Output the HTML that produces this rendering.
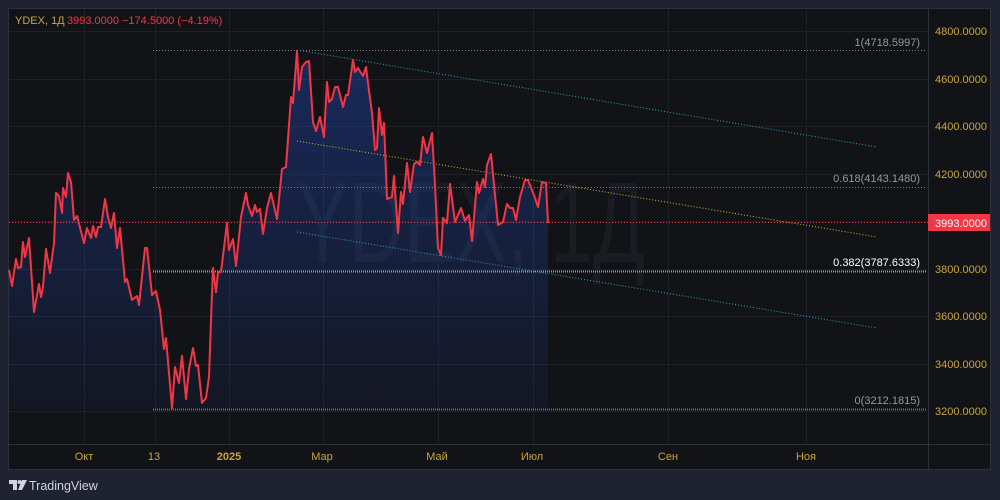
<!DOCTYPE html>
<html><head><meta charset="utf-8"><style>
html,body{margin:0;padding:0;background:#1e222d;}
svg{display:block}
text{font-family:"Liberation Sans",sans-serif;}
</style></head><body>
<svg width="1000" height="500" viewBox="0 0 1000 500" xmlns="http://www.w3.org/2000/svg">
<defs>
<linearGradient id="g" x1="0" y1="0" x2="0" y2="1">
<stop offset="0" stop-color="#2962ff" stop-opacity="0.30"/>
<stop offset="1" stop-color="#2962ff" stop-opacity="0.05"/>
</linearGradient>
</defs>
<rect width="1000" height="500" fill="#1f2230"/>
<rect x="8.5" y="8.5" width="982" height="461" fill="#121317" stroke="#2c303b"/>
<line x1="928.5" y1="9" x2="928.5" y2="469" stroke="#2c303b"/>
<line x1="9" y1="444.5" x2="990" y2="444.5" stroke="#2c303b"/>
<g stroke="#1d2028" stroke-width="1">
<line x1="9" y1="31.5" x2="928" y2="31.5"/><line x1="9" y1="79.5" x2="928" y2="79.5"/><line x1="9" y1="126.5" x2="928" y2="126.5"/><line x1="9" y1="174.5" x2="928" y2="174.5"/><line x1="9" y1="221.5" x2="928" y2="221.5"/><line x1="9" y1="269.5" x2="928" y2="269.5"/><line x1="9" y1="316.5" x2="928" y2="316.5"/><line x1="9" y1="364.5" x2="928" y2="364.5"/><line x1="9" y1="411.5" x2="928" y2="411.5"/>
<line x1="84.5" y1="9" x2="84.5" y2="444"/><line x1="155.5" y1="9" x2="155.5" y2="444"/><line x1="229.5" y1="9" x2="229.5" y2="444"/><line x1="323.5" y1="9" x2="323.5" y2="444"/><line x1="438.5" y1="9" x2="438.5" y2="444"/><line x1="533.5" y1="9" x2="533.5" y2="444"/><line x1="668.5" y1="9" x2="668.5" y2="444"/><line x1="806.5" y1="9" x2="806.5" y2="444"/>
</g>
<text x="297" y="262" font-size="115" fill="#191c23" textLength="348" lengthAdjust="spacingAndGlyphs">YDEX, 1Д</text>
<polygon fill="url(#g)" points="9,410 9,270 12,286 16,259 18,268 21,267 23,242 25,257 29,238 34,312 39,284 41,297 43,287 46,249 50,273 54,243 56,193 59,196 62,213 63,188 66,197 68,173 71,182 74,220 77,216 84,243 87,228 91,238 93,226 96,237 98,227 101,227 105,199 108,217 111,228 114,213 117,248 120,228 125,282 127,279 132,300 137,296 139,305 145,248 147,248 152,295 156,291 160,310 164,349 166,338 172,408 175,367 179,383 182,356 186,399 189,369 193,348 196,366 198,365 202,403 206,398 209,377 212,293 213,268 216,292 218,272 221,272 227,223 229,250 233,239 236,266 241,217 246,193 248,205 252,216 255,205 257,212 260,209 263,234 267,208 271,193 277,219 282,169 286,167 291,97 293,103 297,51 299,90 302,67 306,62 309,61 313,122 316,131 320,117 324,137 327,82 329,102 332,99 335,87 338,87 343,107 346,95 348,95 353,60 355,72 358,68 361,73 363,76 366,67 368,83 372,113 375,150 377,148 379,108 382,135 384,123 387,199 392,197 394,176 398,233 401,192 403,204 407,163 410,192 414,164 417,162 420,165 423,137 427,153 432,133 435,185 438,248 441,255 443,218 447,223 450,184 455,222 461,208 465,221 469,215 472,241 477,182 479,193 483,179 485,187 487,165 491,154 494,185 498,225 503,222 507,204 510,208 513,208 516,220 520,197 525,180 528,180 532,190 535,198 538,207 542,182 546,183 548,223 548,410"/>
<g fill="none" stroke-width="1">
<line x1="153" y1="50.5" x2="927" y2="50.5" stroke="#787b86" stroke-dasharray="1 2"/>
<line x1="153" y1="187.5" x2="927" y2="187.5" stroke="#787b86" stroke-dasharray="1 2"/>
<line x1="153" y1="271.5" x2="927" y2="271.5" stroke="#9598a1" stroke-width="2" stroke-dasharray="1 1"/>
<line x1="153" y1="409.5" x2="927" y2="409.5" stroke="#6a6d78" stroke-width="2" stroke-dasharray="1 1"/>
<line x1="9" y1="222.5" x2="928" y2="222.5" stroke="#f23645" stroke-dasharray="1 2"/>
<line x1="297" y1="50" x2="877" y2="147" stroke="#22a3b8" stroke-dasharray="1 2"/>
<line x1="297" y1="232" x2="877" y2="328" stroke="#22a3b8" stroke-dasharray="1 2"/>
<line x1="297" y1="141" x2="877" y2="237" stroke="#c8b62e" stroke-dasharray="1 2"/>
</g>
<polyline fill="none" stroke="#f23645" stroke-width="2" stroke-linejoin="round" points="9,270 12,286 16,259 18,268 21,267 23,242 25,257 29,238 34,312 39,284 41,297 43,287 46,249 50,273 54,243 56,193 59,196 62,213 63,188 66,197 68,173 71,182 74,220 77,216 84,243 87,228 91,238 93,226 96,237 98,227 101,227 105,199 108,217 111,228 114,213 117,248 120,228 125,282 127,279 132,300 137,296 139,305 145,248 147,248 152,295 156,291 160,310 164,349 166,338 172,408 175,367 179,383 182,356 186,399 189,369 193,348 196,366 198,365 202,403 206,398 209,377 212,293 213,268 216,292 218,272 221,272 227,223 229,250 233,239 236,266 241,217 246,193 248,205 252,216 255,205 257,212 260,209 263,234 267,208 271,193 277,219 282,169 286,167 291,97 293,103 297,51 299,90 302,67 306,62 309,61 313,122 316,131 320,117 324,137 327,82 329,102 332,99 335,87 338,87 343,107 346,95 348,95 353,60 355,72 358,68 361,73 363,76 366,67 368,83 372,113 375,150 377,148 379,108 382,135 384,123 387,199 392,197 394,176 398,233 401,192 403,204 407,163 410,192 414,164 417,162 420,165 423,137 427,153 432,133 435,185 438,248 441,255 443,218 447,223 450,184 455,222 461,208 465,221 469,215 472,241 477,182 479,193 483,179 485,187 487,165 491,154 494,185 498,225 503,222 507,204 510,208 513,208 516,220 520,197 525,180 528,180 532,190 535,198 538,207 542,182 546,183 548,223"/>
<g font-size="11" fill="#9598a1" text-anchor="end">
<text x="920" y="46">1(4718.5997)</text>
<text x="920" y="182">0.618(4143.1480)</text>
<text x="920" y="266" fill="#ffffff">0.382(3787.6333)</text>
<text x="920" y="404">0(3212.1815)</text>
</g>
<g font-size="11" fill="#c9a53a">
<text x="935" y="35">4800.0000</text><text x="935" y="83">4600.0000</text><text x="935" y="130">4400.0000</text><text x="935" y="178">4200.0000</text><text x="935" y="273">3800.0000</text><text x="935" y="320">3600.0000</text><text x="935" y="368">3400.0000</text><text x="935" y="415">3200.0000</text>
</g>
<rect x="928" y="214" width="62" height="17" fill="#f23645"/>
<text x="935" y="227" font-size="11" fill="#ffffff">3993.0000</text>
<g font-size="11" fill="#c9a53a" text-anchor="middle">
<text x="84" y="460">Окт</text><text x="154" y="460">13</text><text x="229" y="460" font-weight="bold">2025</text><text x="322" y="460">Мар</text><text x="437" y="460">Май</text><text x="532" y="460">Июл</text><text x="668" y="460">Сен</text><text x="806" y="460">Ноя</text>
</g>
<text x="15" y="24" font-size="11" fill="#c9a53a">YDEX, 1Д</text>
<text x="67" y="24" font-size="11" fill="#f23645">3993.0000</text>
<text x="122" y="24" font-size="11" fill="#f23645">−174.5000 (−4.19%)</text>
<g fill="#d1d4dc">
<path d="M9 480h8v10h-4v-6h-4z"/><circle cx="19.5" cy="482" r="2"/><path d="M22 480h5l-5 10h-4z"/>
<text x="29" y="490" font-size="12.5">TradingView</text>
</g>
</svg>
</body></html>
